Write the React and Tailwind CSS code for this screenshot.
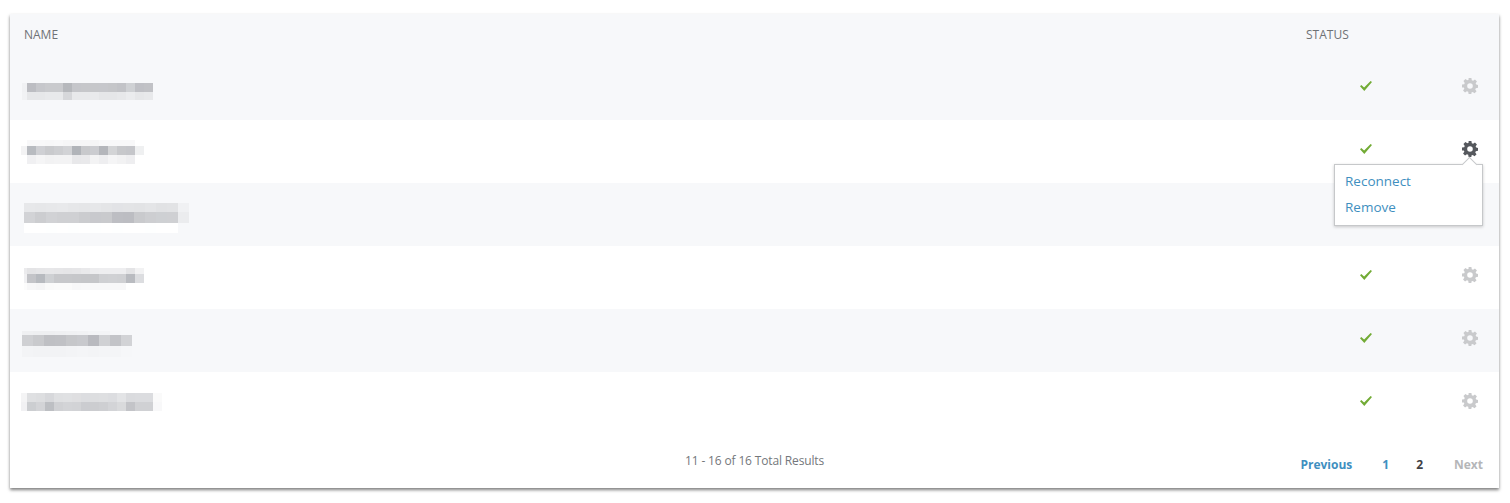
import React from 'react';

// blurred-out account names, each band is a strip of square-ish cells
const rows = [
  {
    pos: 'ml-[12px] mt-[6px]',
    cell: 'w-[9px] first:w-[5px]',
    bands: [
      ['h-[9px]', ['#f0f1f3', '#bcbdc2', '#c6c7cb', '#c9cacd', '#c9cacd', '#b6b8bc', '#c5c6ca', '#c6c7ca', '#c6c7ca', '#c6c7cb', '#c5c6c9', '#c2c3c7', '#cfd1d4', '#bfc0c5', '#c1c2c6']],
      ['h-[8px]', ['#f1f2f4', '#e6e7e9', '#e6e7e9', '#e8e9eb', '#e8e9eb', '#d6d7da', '#e8e9eb', '#e8e9eb', '#e9eaec', '#e5e6e8', '#e5e6e8', '#e7e8ea', '#ebecee', '#e6e7e9', '#e8e9eb']],
    ],
  },
  {
    pos: 'ml-[11px] mt-[1px]',
    cell: 'w-[9px] first:w-[6px]',
    bands: [
      ['h-[6px]', ['#ffffff', '#f8f8f9', '#f8f8f9', '#f7f7f8', '#f8f8f9', '#f6f6f7', '#f6f6f7', '#f6f6f7', '#f5f5f6', '#f8f8f9', '#f8f8f9', '#f8f8f9', '#f8f8f9', '#ffffff']],
      ['h-[9px]', ['#f3f3f4', '#b8bbc0', '#cfd0d4', '#c9cacd', '#cdced1', '#d2d3d6', '#b1b4b9', '#c8c9cc', '#cbccd0', '#b4b6bb', '#d3d4d6', '#c7c8cb', '#c5c6ca', '#eff0f1']],
      ['h-[9px]', ['#ffffff', '#f0f0f2', '#f5f5f6', '#f2f2f3', '#f3f3f4', '#f3f3f4', '#e8e8ea', '#e9e9eb', '#f3f3f4', '#eeeef0', '#f5f5f6', '#f2f2f3', '#eeeef0', '#ffffff']],
    ],
  },
  {
    pos: 'ml-[14px] mt-[7px]',
    cell: 'w-[11px]',
    bands: [
      ['h-[9px]', ['#e7e8ea', '#e6e7e9', '#e7e8ea', '#e8e9eb', '#e6e7e9', '#e5e6e8', '#e6e7e9', '#e4e5e7', '#e2e3e6', '#e3e4e6', '#e2e3e5', '#e4e5e7', '#e1e2e4', '#e2e3e5', '#f0f1f3']],
      ['h-[11px]', ['#d2d3d6', '#cccdd0', '#d1d2d5', '#cfd0d3', '#cfd0d3', '#cbcccf', '#c8c9cd', '#c9cacd', '#bdbec3', '#bcbdc2', '#c9cacd', '#cdced1', '#ced0d3', '#cfd0d3', '#ebecee']],
      ['h-[10px]', ['#ffffff', '#ffffff', '#feffff', '#ffffff', '#feffff', '#ffffff', '#feffff', '#ffffff', '#feffff', '#ffffff', '#ffffff', '#feffff', '#ffffff', '#ffffff']],
    ],
  },
  {
    pos: 'ml-[14px] mt-[3px]',
    cell: 'w-[9px] first:w-[3px]',
    bands: [
      ['h-[6px]', ['#ebebed', '#e4e4e6', '#e6e6e8', '#e7e7e9', '#e6e6e8', '#e5e5e7', '#e6e6e8', '#e9e9eb', '#ededef', '#eeeef0', '#eeeef0', '#eeeef0', '#e4e4e6', '#f2f2f3']],
      ['h-[9px]', ['#f0f0f2', '#c3c4c8', '#b7babf', '#ced0d3', '#c7c8cb', '#c7c8cb', '#c6c7ca', '#c5c6c9', '#c5c6c9', '#cfd0d3', '#d0d1d4', '#cfd0d3', '#b9bbc0', '#dcdde0']],
      ['h-[7px]', ['#fcfcfc', '#f7f7f8', '#f5f5f6', '#fafafa', '#fbfbfb', '#fbfbfb', '#f8f8f9', '#f9f9fa', '#f8f8f9', '#f8f8f9', '#f8f8f9', '#f8f8f9', '#ffffff']],
    ],
  },
  {
    pos: 'ml-[12px] mt-[7px]',
    cell: 'w-[11px]',
    bands: [
      ['h-[4px]', ['#eff0f2', '#eeeff1', '#eeeff1', '#eff0f2', '#f0f1f3', '#f1f2f4', '#f3f4f6', '#f3f4f6', '#f6f7f9', '#f7f8fa']],
      ['h-[11px]', ['#cfd0d3', '#c9cacd', '#bfc0c4', '#c0c1c5', '#c6c7ca', '#c8c9cd', '#b9babf', '#d0d1d4', '#c3c4c8', '#d2d3d6']],
      ['h-[11px]', ['#f3f4f6', '#f2f3f5', '#f2f3f5', '#f2f3f5', '#f3f4f6', '#f4f5f7', '#f3f4f6', '#f4f5f7', '#f4f5f7', '#f6f7f9']],
    ],
  },
  {
    pos: 'ml-[11px] mt-[-3px]',
    cell: 'w-[9px] first:w-[6px]',
    bands: [
      ['h-[9px]', ['#f4f4f5', '#dfe0e2', '#dddee0', '#d7d8db', '#dfe0e2', '#e0e1e3', '#dfdfe1', '#dcdde0', '#dddee0', '#dedfe1', '#dcdde0', '#e3e4e6', '#dadbde', '#dbdcdf', '#dbdcdf', '#fafafa']],
      ['h-[9px]', ['#f1f1f3', '#ccced1', '#d3d4d7', '#bdbfc3', '#d0d1d4', '#d3d4d7', '#d2d3d6', '#cbccd0', '#cccdd0', '#cecfd2', '#d3d4d7', '#d9dadc', '#c3c4c8', '#d0d1d4', '#d0d1d4', '#f8f8f9']],
    ],
  },
];

const Mosaic = ({ row }) => (
  <div className={`flex flex-col ${row.pos}`}>
    {row.bands.map(([height, cells], i) => (
      <div key={i} className={`flex ${height}`}>
        {cells.map((color, j) => (
          <div key={j} className={`h-full ${row.cell}`} style={{ backgroundColor: color }} />
        ))}
      </div>
    ))}
  </div>
);

const Check = () => (
  <svg viewBox="0 0 12 10" className="w-[12px] h-[10px] text-[#72ab35]" fill="currentColor">
    <path d="M0 5.3 L1.3 4.1 L4.1 6.6 L10.6 0 L12 1 L4.3 10 Z" />
  </svg>
);

const Gear = ({ className }) => (
  <svg viewBox="0 0 16 16" className={className} fill="currentColor">
    <path
      fillRule="evenodd"
      d="M6.6 0h2.8l.4 2.2 1.3.55 1.85-1.3 2 2-1.3 1.85.55 1.3L16 7v2.8l-2.2.4-.55 1.3 1.3 1.85-2 2-1.85-1.3-1.3.55L9.4 16H6.6l-.4-2.2-1.3-.55-1.85 1.3-2-2 1.3-1.85-.55-1.3L0 9.4V6.6l2.2-.4.55-1.3-1.3-1.85 2-2 1.85 1.3 1.3-.55zM8 5.2a2.8 2.8 0 1 0 0 5.6 2.8 2.8 0 0 0 0-5.6z"
    />
  </svg>
);

const Row = ({ row, index, active }) => (
  <div className={`flex h-[63px] items-center ${index % 2 === 0 ? 'bg-[#f7f8fa]' : 'bg-white'} ${active ? 'relative z-10' : ''}`}>
    <div className="flex-1">
      <Mosaic row={row} />
    </div>
    <div className="flex w-[193px] items-center pl-[54px] mb-[6px]">
      <Check />
      <div className="relative ml-[90px] mt-[1px]">
        <Gear className={`w-[16px] h-[16px] ${active ? 'text-[#55585d]' : 'text-[#c9cacc]'}`} />
        {active && (
          <div className="absolute top-[23px] right-[-5px] w-[149px] h-[62px] border border-[#c6c8ca] bg-white pt-[6px] pl-[10px] shadow-[0_1px_3px_rgba(0,0,0,0.2)]">
            <div className="absolute top-[-6px] right-[7px] w-[11px] h-[11px] rotate-45 border-l border-t border-[#c6c8ca] bg-white" />
            <a className="relative block h-[26px] leading-[20px] text-[13.5px] font-medium text-[#3f8fc0]">Reconnect</a>
            <a className="relative block h-[26px] leading-[20px] text-[13.5px] font-medium text-[#3f8fc0]">Remove</a>
          </div>
        )}
      </div>
    </div>
  </div>
);

export default function App() {
  return (
    <div className="min-h-[503px] bg-white px-[10px] pt-[14px] font-['Open_Sans',sans-serif]">
      <div className="w-[1489px] bg-white shadow-[0_2px_3px_rgba(0,0,0,0.5)]">
        <div className="flex h-[43px] items-center bg-[#f7f8fa] text-[12px] uppercase text-[#6f7276] pb-[1px]">
          <div className="flex-1 pl-[14px]">Name</div>
          <div className="w-[193px]">Status</div>
        </div>

        {rows.map((row, i) => (
          <Row key={i} row={row} index={i} active={i === 1} />
        ))}

        <div className="grid h-[53px] grid-cols-[1fr_auto_1fr] items-center pb-[2px] text-[12px]">
          <div />
          <div className="text-[#74777b] tracking-[-0.15px]">11 - 16 of 16 Total Results</div>
          <div className="flex justify-end pr-[16px] pt-[8px] font-bold text-[12px]">
            <a className="text-[#3f8fc0]">Previous</a>
            <a className="ml-[30px] text-[#3f8fc0]">1</a>
            <span className="ml-[27px] text-[#3f4145]">2</span>
            <a className="ml-[31px] text-[#b5b6b8]">Next</a>
          </div>
        </div>
      </div>
    </div>
  );
}
